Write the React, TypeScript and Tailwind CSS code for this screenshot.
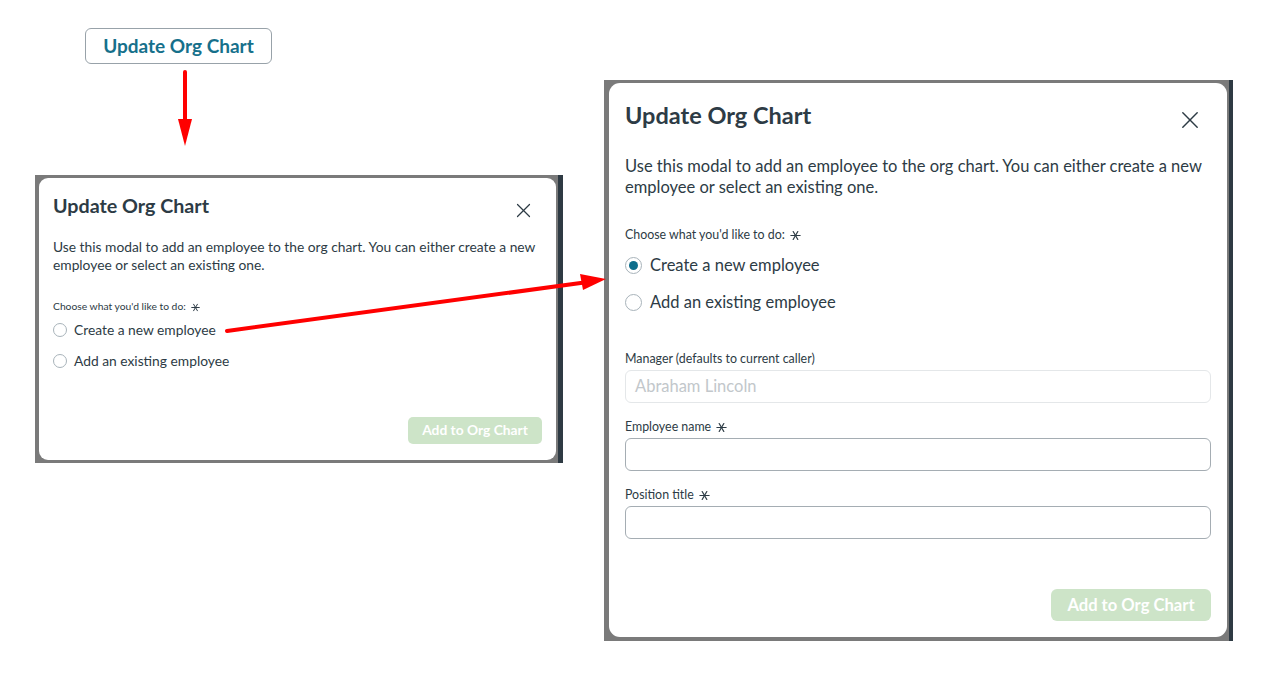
import React from 'react';

type Size = 'sm' | 'lg';

function Asterisk({ size }: { size: number }) {
  // six point required marker
  return (
    <svg width={size} height={size} viewBox="0 0 10 10" className="inline-block ml-[5px]" fill="none" stroke="#2d3b45" strokeWidth="1.1" strokeLinecap="round">
      <line x1="0.8" y1="5" x2="9.2" y2="5" />
      <line x1="2.9" y1="1.4" x2="7.1" y2="8.6" />
      <line x1="7.1" y1="1.4" x2="2.9" y2="8.6" />
    </svg>
  );
}

function CloseIcon({ size }: { size: number }) {
  return (
    <svg width={size} height={size} viewBox="0 0 20 20" fill="none" stroke="#2d3b45" strokeWidth="1.6" strokeLinecap="round">
      <line x1="2" y1="2" x2="18" y2="18" />
      <line x1="18" y1="2" x2="2" y2="18" />
    </svg>
  );
}

function Radio({ checked, sm }: { checked?: boolean; sm?: boolean }) {
  return (
    <span
      className={`flex items-center justify-center rounded-full border bg-white ${
        sm ? 'w-[14px] h-[14px] border-[#a8b3ba]' : 'w-[17px] h-[17px] border-[#a8b3ba]'
      }`}
    >
      {checked && <span className="w-[9px] h-[9px] rounded-full bg-[#0e6e8c]" />}
    </span>
  );
}

function Field({ label, required, placeholder, disabled }: { label: string; required?: boolean; placeholder?: string; disabled?: boolean }) {
  return (
    <div className="flex flex-col">
      <div className="h-[16px] flex items-center text-[12.4px] text-[#2d3b45]">
        {label}
        {required && <Asterisk size={11} />}
      </div>
      <div
        className={`mt-[3px] h-[33px] rounded-[6px] border flex items-center px-[9px] text-[16.5px] ${
          disabled ? 'border-[#e4e7e9] text-[#c2c7cb]' : 'border-[#a5adb3] text-[#2d3b45]'
        }`}
      >
        {placeholder}
      </div>
    </div>
  );
}

function Modal({ size, expanded }: { size: Size; expanded?: boolean }) {
  const sm = size === 'sm';
  return (
    <div className="flex bg-[#2e3a43]">
      <div className={`bg-[#7a7a7a] ${sm ? 'pl-[4px] pt-[3px] pb-[3px] pr-[2px]' : 'pl-[5px] pt-[3px] pb-[4px] pr-[2px]'}`}>
        <div
          className={`bg-white flex flex-col ${
            sm ? 'w-[517px] h-[282px] rounded-[9px] px-[14px] pt-[14px] pb-[16px]' : 'w-[618px] h-[554px] rounded-[11px] px-[16px] pt-[16px] pb-[16px]'
          }`}
        >
          <div className="flex items-start justify-between">
            <h2 className={`font-bold text-[#2d3b45] ${sm ? 'text-[19.7px] leading-[28px]' : 'text-[23.5px] leading-[32px]'}`}>Update Org Chart</h2>
            <div className={sm ? 'mt-[11px] mr-[11px]' : 'mt-[12px] mr-[12px]'}>
              <CloseIcon size={sm ? 15 : 18} />
            </div>
          </div>

          <p className={`text-[#2d3b45] ${sm ? 'mt-[18px] text-[13.8px] leading-[18px]' : 'mt-[25px] text-[16.5px] leading-[21px] pr-[2px]'}`}>
            Use this modal to add an employee to the org chart. You can either create a new employee or select an existing one.
          </p>

          <div className={`flex items-center text-[#2d3b45] ${sm ? 'mt-[26px] text-[10.3px] h-[14px]' : 'mt-[29px] text-[12.4px] h-[16px]'}`}>
            Choose what you'd like to do:
            <Asterisk size={sm ? 9 : 11} />
          </div>

          <div className={`flex flex-col ${sm ? 'mt-[6px] gap-[11px]' : 'mt-[10px] gap-[13px]'}`}>
            {['Create a new employee', 'Add an existing employee'].map((t, i) => (
              <div key={t} className={`flex items-center text-[#2d3b45] ${sm ? 'h-[20px] gap-[7px] text-[13.8px]' : 'h-[24px] gap-[8px] text-[16.5px]'}`}>
                <Radio sm={sm} checked={expanded && i === 0} />
                {t}
              </div>
            ))}
          </div>

          {expanded && (
            <div className="mt-[37px] flex flex-col gap-[16px]">
              <Field label="Manager (defaults to current caller)" placeholder="Abraham Lincoln" disabled />
              <Field label="Employee name" required />
              <Field label="Position title" required />
            </div>
          )}

          <div className="mt-auto flex justify-end">
            <div
              className={`bg-[#cde4c8] text-white font-bold flex items-center justify-center ${
                sm ? 'w-[134px] h-[27px] rounded-[5px] text-[13.8px]' : 'w-[160px] h-[32px] rounded-[6px] text-[16.6px]'
              }`}
            >
              Add to Org Chart
            </div>
          </div>
        </div>
      </div>
      <div className={sm ? 'w-[5px]' : 'w-[4px]'} />
    </div>
  );
}

export default function App() {
  return (
    <div className="relative w-[1283px] h-[676px] bg-white flex font-['Lato','Liberation_Sans',sans-serif]">
      {/* left: trigger + small modal */}
      <div className="pl-[35px] pt-[28px] flex flex-col">
        <div className="ml-[50px] w-[187px] h-[36px] rounded-[6px] border border-[#98a2a9] flex items-center justify-center text-[19px] font-bold text-[#16708b]">
          Update Org Chart
        </div>
        <svg width="16" height="78" viewBox="0 0 16 78" className="ml-[142px] mt-[6px]">
          <line x1="8" y1="2" x2="8" y2="52" stroke="#ff0000" strokeWidth="4" strokeLinecap="round" />
          <polygon points="1,49 15,49 8,76" fill="#ff0000" />
        </svg>
        <div className="mt-[27px]">
          <Modal size="sm" />
        </div>
      </div>

      {/* right: expanded modal */}
      <div className="ml-[41px] pt-[80px]">
        <Modal size="lg" expanded />
      </div>

      {/* connector arrow */}
      <svg className="absolute left-0 top-0 pointer-events-none" width="1283" height="676">
        <line x1="227" y1="331" x2="588" y2="282" stroke="#ff0000" strokeWidth="4" strokeLinecap="round" />
        <polygon points="580,274 583,290 606,279" fill="#ff0000" />
      </svg>
    </div>
  );
}
